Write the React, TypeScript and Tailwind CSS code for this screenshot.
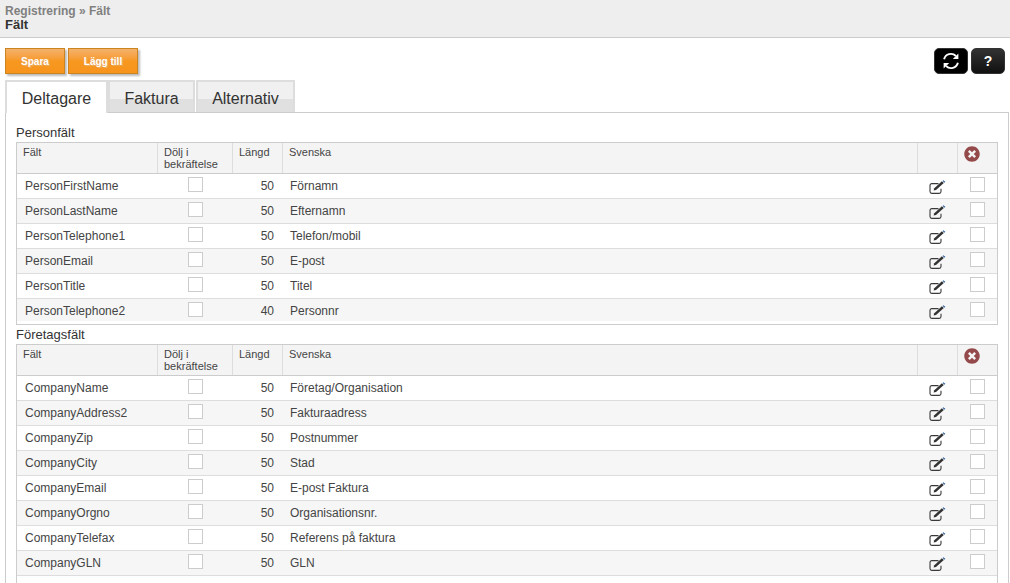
import { FaTimesCircle } from 'react-icons/fa'

const personFields = [
  ['PersonFirstName', '50', 'Förnamn'],
  ['PersonLastName', '50', 'Efternamn'],
  ['PersonTelephone1', '50', 'Telefon/mobil'],
  ['PersonEmail', '50', 'E-post'],
  ['PersonTitle', '50', 'Titel'],
  ['PersonTelephone2', '40', 'Personnr'],
]

const companyFields = [
  ['CompanyName', '50', 'Företag/Organisation'],
  ['CompanyAddress2', '50', 'Fakturaadress'],
  ['CompanyZip', '50', 'Postnummer'],
  ['CompanyCity', '50', 'Stad'],
  ['CompanyEmail', '50', 'E-post Faktura'],
  ['CompanyOrgno', '50', 'Organisationsnr.'],
  ['CompanyTelefax', '50', 'Referens på faktura'],
  ['CompanyGLN', '50', 'GLN'],
]

function CheckBox() {
  return <div className="w-[15px] h-[15px] border border-[#ccc] bg-white" />
}

function EditIcon() {
  return (
    <svg width="17" height="14" viewBox="0 0 17 14" fill="none">
      <path d="M9.5 3.6H2.8A1.8 1.8 0 0 0 1 5.4v6.2a1.8 1.8 0 0 0 1.8 1.8h7.4a1.8 1.8 0 0 0 1.8-1.8V8.8" stroke="#3a3a3a" strokeWidth="1.1" />
      <path d="M4.6 10.4 5.3 8.2 12.9 1.2 14.8 3 7 10Z" fill="#333" />
      <path d="M14 0.6 15.9 2.3" stroke="#2a5f9e" strokeWidth="1.2" />
    </svg>
  )
}

function RefreshIcon() {
  return (
    <svg width="20" height="20" viewBox="0 0 20 20" fill="none">
      <path d="M3.1 8.2A7 7 0 0 1 14.9 5" stroke="white" strokeWidth="1.9" />
      <path d="M17.4 2.4V8H11.8Z" fill="white" />
      <path d="M16.9 11.8A7 7 0 0 1 5.1 15" stroke="white" strokeWidth="1.9" />
      <path d="M2.6 17.6V12H8.2Z" fill="white" />
    </svg>
  )
}

function FieldTable({ rows, closed }: { rows: string[][]; closed?: boolean }) {
  return (
    <div className="border-x border-t border-[#ccc] w-[982px]">
      <div className="flex h-[31px] bg-[#f4f4f4] border-b border-[#ccc] text-[11px] leading-[12px] text-[#444]">
        <div className="w-[141px] pl-[6px] pt-[3px] border-r border-[#ddd]">Fält</div>
        <div className="w-[75px] pl-[6px] pt-[3px] border-r border-[#ddd]">Dölj i<br />bekräftelse</div>
        <div className="w-[50px] pl-[6px] pt-[3px] border-r border-[#ddd]">Längd</div>
        <div className="w-[635px] pl-[6px] pt-[3px] border-r border-[#ddd]">Svenska</div>
        <div className="w-[40px] border-r border-[#ddd]" />
        <div className="flex-1 pl-[6px] pt-[3px]">
          <FaTimesCircle className="text-[#944a4a] text-[16px]" />
        </div>
      </div>
      {rows.map(([name, length, label], i) => {
        const last = closed && i === rows.length - 1
        return (
          <div
            key={name}
            className={`flex text-[12px] text-[#444] ${last ? 'h-[22px]' : 'h-[25px] border-b border-[#ddd]'} ${i % 2 === 1 ? 'bg-[#f6f6f6]' : 'bg-white'}`}
          >
            <div className="w-[141px] pl-[8px] pt-[3px]">{name}</div>
            <div className="w-[75px] pl-[30px] pt-[3px]"><CheckBox /></div>
            <div className="w-[50px] pr-[9px] pt-[3px] text-right">{length}</div>
            <div className="w-[635px] pl-[7px] pt-[3px]">{label}</div>
            <div className="w-[40px] pl-[11px] pt-[6px]"><EditIcon /></div>
            <div className="flex-1 pl-[12px] pt-[3px]"><CheckBox /></div>
          </div>
        )
      })}
      {closed ? <div className="h-[4px] border-b border-[#ccc]" /> : <div className="h-[10px]" />}
    </div>
  )
}

export default function App() {
  const orange = 'h-[26px] border border-[#cc8420] bg-gradient-to-b from-[#f4b26a] via-[#f7981f] to-[#f7941d] text-white text-[10px] font-bold shadow-[2px_2px_2px_#bbb] [text-shadow:1px_1px_1px_#e8b070]'
  const inactiveTab = 'h-[32px] border-2 border-b-0 border-[#ddd] bg-[linear-gradient(#f0f0f0_55%,#e0e0e0_55%)] text-[16px] text-[#333] text-center leading-[33px]'

  return (
    <div className="h-[583px] overflow-hidden bg-white font-['Liberation_Sans',Arial,sans-serif]">
      <div className="h-[38px] bg-[#eeeeee] border-b border-[#ccc] pl-[5px] pt-[4px]">
        <div className="text-[12px] leading-[14px] font-bold text-[#808080]">Registrering » Fält</div>
        <div className="text-[13px] leading-[14px] font-bold text-[#333]">Fält</div>
      </div>

      <div className="flex justify-between px-[5px] pt-[10px]">
        <div className="flex gap-[3px]">
          <button className={`w-[60px] ${orange}`}>Spara</button>
          <button className={`w-[70px] ${orange}`}>Lägg till</button>
        </div>
        <div className="flex gap-[3px]">
          <button className="w-[34px] h-[26px] rounded-[5px] bg-black border border-[#333] flex items-center justify-center"><RefreshIcon /></button>
          <button className="w-[34px] h-[26px] rounded-[5px] bg-gradient-to-b from-[#333] to-[#111] border border-[#333] text-white text-[14px] font-bold">?</button>
        </div>
      </div>

      <div className="flex pl-[5px] mt-[6px] h-[32px]">
        <div className="w-[103px] h-[33px] border-2 border-b-0 border-[#ddd] bg-white text-[16px] text-[#333] text-center leading-[33px] relative z-10">Deltagare</div>
        <div className={`w-[87px] ${inactiveTab}`}>Faktura</div>
        <div className={`w-[99px] ml-[1px] ${inactiveTab}`}>Alternativ</div>
      </div>

      <div className="ml-[5px] mr-[1px] border-x border-t border-[#ccc] pl-[10px] h-[500px]">
        <div className="text-[13px] leading-[15px] text-[#333] pt-[12px] pb-[2px]">Personfält</div>
        <FieldTable rows={personFields} closed />
        <div className="text-[13px] leading-[15px] text-[#333] pt-[2px] pb-[2px]">Företagsfält</div>
        <FieldTable rows={companyFields} />
      </div>
    </div>
  )
}
